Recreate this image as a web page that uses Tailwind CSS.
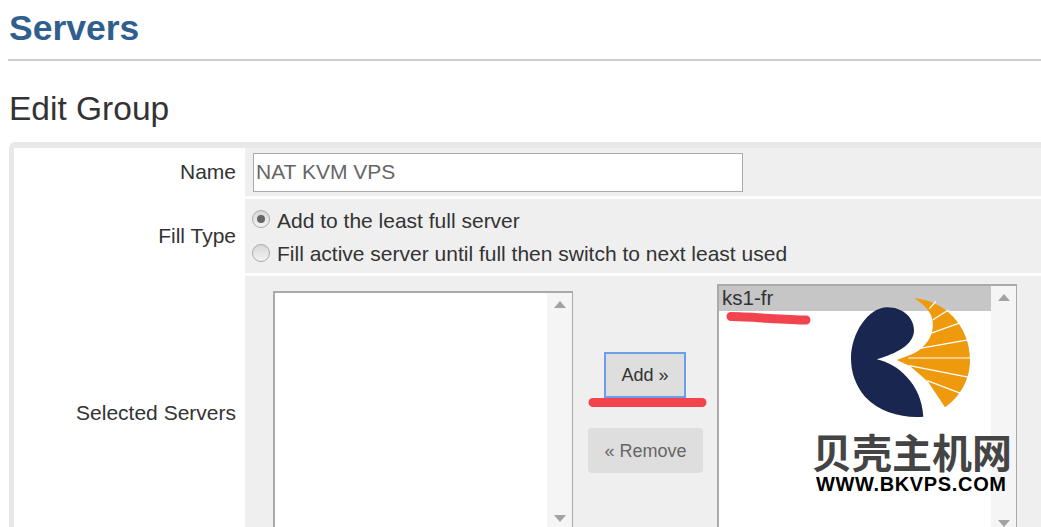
<!DOCTYPE html>
<html lang="en">
    <head>
        <meta charset="UTF-8" />
        <title>Servers</title>
        <script src="https://cdn.jsdelivr.net/npm/@tailwindcss/browser@4"></script>
    </head>
    <body class="bg-white h-[527px] overflow-hidden relative font-['Liberation_Sans',Arial,sans-serif] text-[#333]">
        <div class="pl-2">
            <div class="h-[61px] border-b-2 border-[#ccc]">
                <h1 class="pl-px pt-[7px] text-[35.500px] leading-[42px] font-bold text-[#2f5f8f]">Servers</h1>
            </div>
            <h2 class="pl-px mt-[28px] text-[33.500px] leading-[40px]">Edit Group</h2>

            <!-- form table -->
            <div class="mt-[13px] ml-px border-t-[6px] border-l-[5px] border-[#e8e8e8] rounded-tl-md grid grid-cols-[231px_1fr] gap-y-[3px] text-[21px] leading-[26px]">
                <div class="h-[48px] flex items-center justify-end pr-[9px]">Name</div>
                <div class="h-[48px] bg-[#efefef] flex items-center pl-[8px]">
                    <input type="text" value="NAT KVM VPS" class="w-[490px] h-[39px] border border-[#aaa] bg-white px-[2px] text-[21px] text-[#666]" />
                </div>

                <div class="h-[74px] flex items-center justify-end pr-[9px]">Fill Type</div>
                <div class="h-[74px] bg-[#efefef] pl-[7px] pt-[9px] flex flex-col gap-[7px]">
                    <label class="flex items-center gap-[7px] h-[26px]">
                        <span class="w-[18px] h-[18px] rounded-full border border-[#aaa] bg-linear-to-b from-[#d8d8d8] to-[#f4f4f4] flex items-center justify-center -mt-[4px]">
                            <span class="w-[8px] h-[8px] rounded-full bg-[#666]"></span>
                        </span>
                        Add to the least full server
                    </label>
                    <label class="flex items-center gap-[7px] h-[26px]">
                        <span class="w-[18px] h-[18px] rounded-full border border-[#aaa] bg-linear-to-b from-[#d8d8d8] to-[#f4f4f4] -mt-[2px]"></span>
                        Fill active server until full then switch to next least used
                    </label>
                </div>

                <div class="h-[274px] flex items-center justify-end pr-[9px]">Selected Servers</div>
                <div class="h-[274px] bg-[#efefef] flex items-start pl-[28px]">
                    <!-- available list -->
                    <div class="mt-[15px] w-[300px] h-[250px] border-2 border-[#aaa] border-r border-b-0 bg-white flex justify-end">
                        <div class="w-[25px] bg-[#f5f5f5] flex flex-col justify-between items-center pt-[8px] pb-[19px]">
                            <span class="w-0 h-0 border-x-[6px] border-x-transparent border-b-[7px] border-b-[#a3a3a3]"></span>
                            <span class="w-0 h-0 border-x-[6px] border-x-transparent border-t-[7px] border-t-[#a3a3a3]"></span>
                        </div>
                    </div>

                    <div class="ml-[15px] w-[115px] mt-[76px] flex flex-col items-center">
                        <button class="w-[82px] h-[46px] mr-px border-2 border-[#6d9eeb] bg-[#dedede] text-[18px] text-[#333]">Add »</button>
                        <button class="w-[115px] h-[45px] mt-[30px] rounded bg-[#dedede] text-[18px] text-[#666]">« Remove</button>
                    </div>

                    <!-- selected list -->
                    <div class="ml-[14px] mt-[8px] w-[300px] h-[246px] border-2 border-[#aaa] border-r border-b-0 bg-white flex">
                        <div class="flex-1">
                            <div class="h-[25px] bg-[#c6c6c6] pl-[3px] text-[20.500px] leading-[24px]">ks1-fr</div>
                        </div>
                        <div class="w-[25px] bg-[#f5f5f5] flex flex-col justify-between items-center pt-[8px] pb-[3px]">
                            <span class="w-0 h-0 border-x-[6px] border-x-transparent border-b-[7px] border-b-[#a3a3a3]"></span>
                            <span class="w-0 h-0 border-x-[6px] border-x-transparent border-t-[7px] border-t-[#a3a3a3]"></span>
                        </div>
                    </div>
                </div>
            </div>
        </div>

        <!-- red marker strokes -->
        <svg class="absolute left-0 top-0 pointer-events-none" width="1041" height="527" viewBox="0 0 1041 527">
            <path d="M593 402.500H702" stroke="#f2444f" stroke-width="9" stroke-linecap="round" fill="none" />
            <path d="M731 316.500C750 316.500 785 320 806 320" stroke="#f2444f" stroke-width="9" stroke-linecap="round" fill="none" />
        </svg>

        <!-- watermark logo -->
        <svg class="absolute left-[840px] top-[290px]" width="140" height="135" viewBox="0 0 420 405">
            <path fill="#19264f" d="M250 380C190 385 120 368 75 320C45 285 33 245 33 205C33 130 85 52 142 52C190 52 222 85 222 120C222 165 170 190 110 208C170 220 245 280 250 380Z" />
            <path fill="#ee9a0c" d="M222 25C310 30 390 105 390 210C390 270 360 320 315 352L264 275L210 228L170 210L210 195C240 185 265 160 275 130C282 105 278 85 270 70C258 50 240 35 222 25Z" />
            <g stroke="#fff" stroke-width="3.500" fill="none">
                <path d="M268 56L288 34" />
                <path d="M278 90L325 60" />
                <path d="M272 130L362 98" />
                <path d="M240 175L392 148" />
                <path d="M205 204H395" />
                <path d="M208 227L392 263" />
                <path d="M262 272L364 311" />
            </g>
        </svg>
        <div class="absolute left-[812px] top-[429px] w-[200px] text-[40px] leading-[44px] font-bold text-[#444] whitespace-nowrap font-['Noto_Sans_CJK_SC',sans-serif]">贝壳主机网</div>
        <div class="absolute left-[816px] top-[474px] text-[20px] leading-[20px] font-bold tracking-[0.650px] text-black whitespace-nowrap">WWW.BKVPS.COM</div>
    </body>
</html>
